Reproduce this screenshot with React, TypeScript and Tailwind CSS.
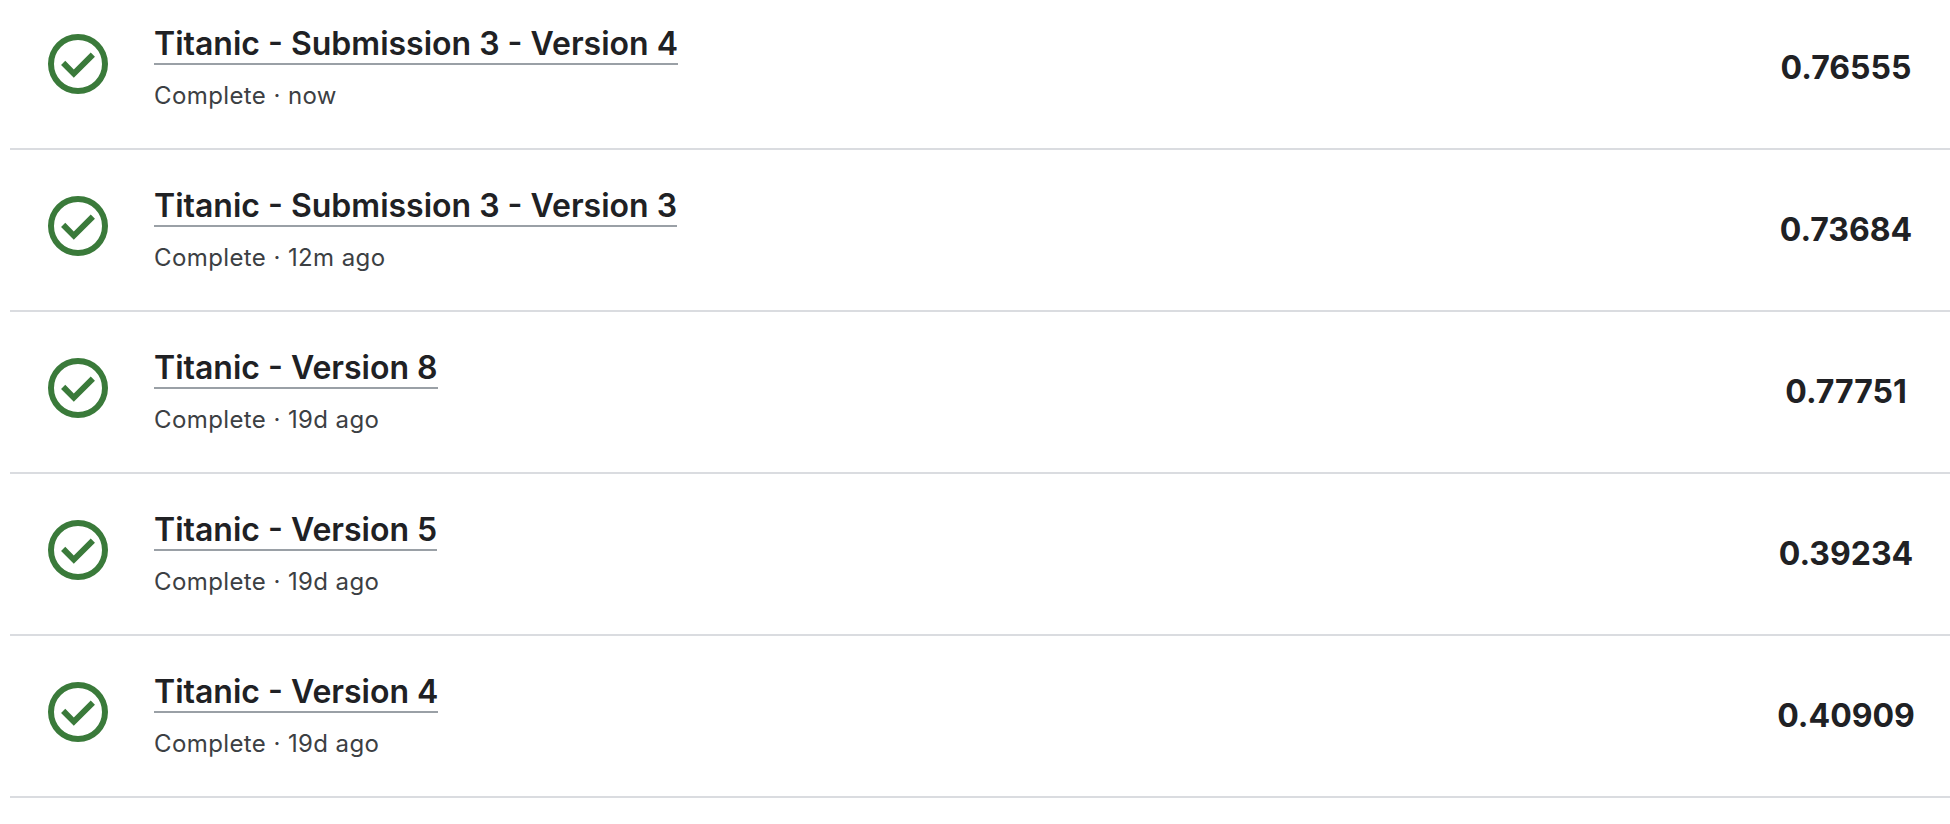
interface Submission {
  title: string;
  age: string;
  score: string;
}

const submissions: Submission[] = [
  { title: "Titanic - Submission 3 - Version 4", age: "now", score: "0.76555" },
  { title: "Titanic - Submission 3 - Version 3", age: "12m ago", score: "0.73684" },
  { title: "Titanic - Version 8", age: "19d ago", score: "0.77751" },
  { title: "Titanic - Version 5", age: "19d ago", score: "0.39234" },
  { title: "Titanic - Version 4", age: "19d ago", score: "0.40909" },
];

function CheckCircle() {
  return (
    <svg viewBox="0 -960 960 960" className="mt-[40px] size-[72px] shrink-0 fill-[#3a7a3a]" aria-hidden="true">
      <path d="m424-296 282-282-56-56-226 226-114-114-56 56 170 170Zm56 216q-83 0-156-31.500T197-197q-54-54-85.500-127T80-480q0-83 31.500-156T197-763q54-54 127-85.500T480-880q83 0 156 31.500T763-763q54 54 85.500 127T880-480q0 83-31.500 156T763-197q-54 54-127 85.500T480-80Zm0-80q134 0 227-93t93-227q0-134-93-227t-227-93q-134 0-227 93t-93 227q0 134 93 227t227 93Z" />
    </svg>
  );
}

function SubmissionRow({ title, age, score }: Submission) {
  return (
    <li className="flex h-[162px] items-start border-b-2 border-[#dadce0] pl-[32px]">
      <CheckCircle />
      <div className="ml-[40px] flex grow flex-col items-start">
        <a className="mt-[36px] h-[41px] border-b-2 border-[#9aa0a6] text-[32px] leading-[40px] font-semibold whitespace-nowrap text-[#202124]">
          {title}
        </a>
        <p className="mt-[13px] text-[24px] leading-[36px] tracking-[0.4px] text-[#3c4043]">
          Complete · {age}
        </p>
      </div>
      <div className="mt-[60px] w-[208px] shrink-0 text-center text-[32px] leading-[40px] font-bold text-[#202124]">
        {score}
      </div>
    </li>
  );
}

export default function App() {
  return (
    <main className="h-[824px] overflow-hidden bg-white pl-[10px] font-['Inter',sans-serif]">
      <ul className="-mt-[12px]">
        {submissions.map((item) => (
          <SubmissionRow key={item.title} {...item} />
        ))}
      </ul>
    </main>
  );
}
